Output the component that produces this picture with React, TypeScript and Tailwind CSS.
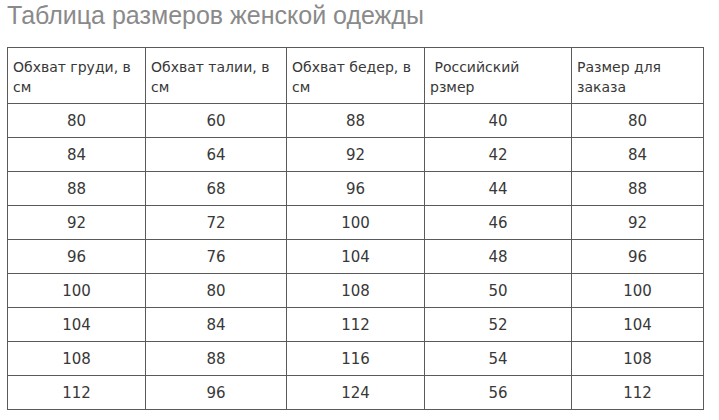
const headers = [
  ["Обхват груди, в", "см"],
  ["Обхват талии, в", "см"],
  ["Обхват бедер, в", "см"],
  ["\u00a0Российский", "рзмер"],
  ["Размер для", "заказа"],
];

const rows = [
  [80, 60, 88, 40, 80],
  [84, 64, 92, 42, 84],
  [88, 68, 96, 44, 88],
  [92, 72, 100, 46, 92],
  [96, 76, 104, 48, 96],
  [100, 80, 108, 50, 100],
  [104, 84, 112, 52, 104],
  [108, 88, 116, 54, 108],
  [112, 96, 124, 56, 112],
];

const widths = [138, 141, 138, 147, 132];

export default function App() {
  return (
    <div className="w-[719px] h-[420px] bg-white overflow-hidden">
      <h1 className="pl-[7px] pt-[1px] text-[25px] leading-[28px] text-[#8a8a8a] font-normal font-['Liberation_Sans',Arial,sans-serif]">
        Таблица размеров женской одежды
      </h1>
      <table className="mt-[18px] ml-[7px] table-fixed border-collapse text-[#383838] font-['DejaVu_Sans',sans-serif]">
        <colgroup>
          {widths.map((w, i) => (
            <col key={i} style={{ width: w }} />
          ))}
        </colgroup>
        <thead>
          <tr className="h-[56px]">
            {headers.map(([a, b], i) => (
              <th
                key={i}
                className="border border-[#5a5a5a] px-[5px] pt-[7px] pb-[5px] text-left align-middle text-[14px] leading-[20px] font-normal"
              >
                {a}
                <br />
                {b}
              </th>
            ))}
          </tr>
        </thead>
        <tbody>
          {rows.map((r, i) => (
            <tr key={i} className="h-[34px]">
              {r.map((v, j) => (
                <td
                  key={j}
                  className="border border-[#5a5a5a] p-0 text-center align-middle text-[15px] leading-[20px]"
                >
                  {v}
                </td>
              ))}
            </tr>
          ))}
        </tbody>
      </table>
    </div>
  );
}
